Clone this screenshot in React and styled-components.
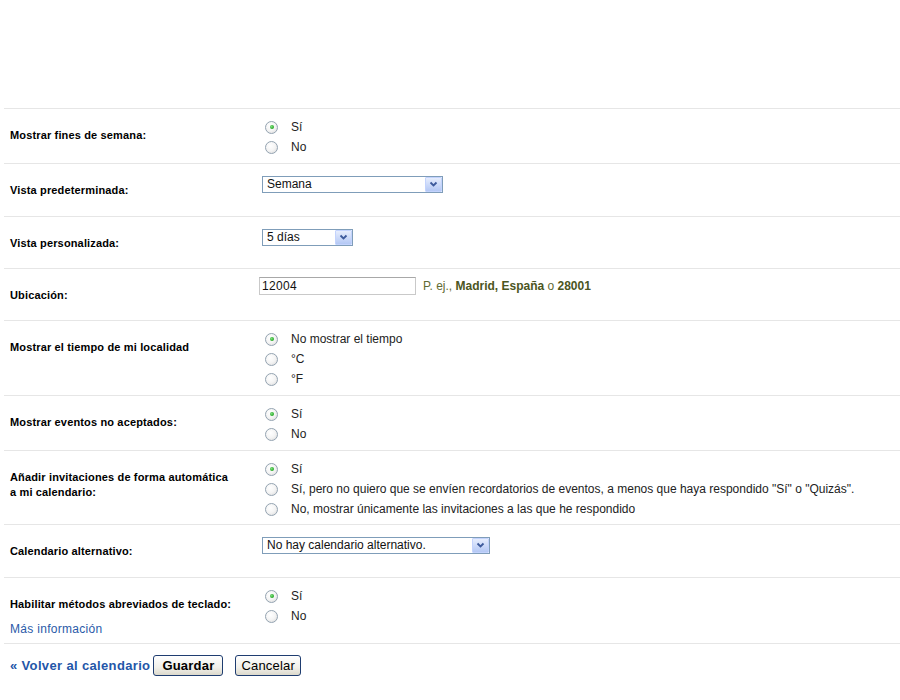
import React from "react";
import styled, { createGlobalStyle } from "styled-components";

const Global = createGlobalStyle`
  html, body { margin: 0; padding: 0; background: #fff; }
  body { font-family: "Liberation Sans", Arial, sans-serif; color: #000; }
`;

const Page = styled.div`
  padding: 108px 0 0 4px;
  width: 900px;
  box-sizing: border-box;
`;

const Row = styled.div`
  display: flex;
  border-top: 1px solid #e6e6e6;
`;

const LabelCell = styled.div`
  width: 255px;
  flex: none;
  box-sizing: border-box;
  padding: 19px 6px ${(p) => (p.$pb != null ? p.$pb : 17)}px 6px;
  font-size: 11px;
  line-height: 15px;
  font-weight: bold;
  letter-spacing: 0.15px;
`;

const MoreLink = styled.a`
  display: block;
  margin-top: 10px;
  font-weight: normal;
  font-size: 12px;
  line-height: 15px;
  color: #2a5aa8;
  text-decoration: none;
  letter-spacing: 0.3px;
`;

const ContentCell = styled.div`
  flex: 1;
  padding: ${(p) => (p.$pt != null ? p.$pt : 8)}px 0 ${(p) => (p.$pb != null ? p.$pb : 6)}px 0;
  font-size: 12px;
`;

const Option = styled.label`
  display: flex;
  align-items: center;
  height: 20px;
  color: #222;
`;

const Radio = styled.span`
  position: relative;
  width: 11px;
  height: 11px;
  margin-left: 6px;
  margin-right: 13px;
  border-radius: 50%;
  border: 1px solid #94a3b1;
  background: radial-gradient(circle at 40% 35%, #ffffff 0%, #f4f4f4 50%, #d8d8d8 100%);
  flex: none;
  &::after {
    content: "";
    display: ${(p) => (p.$checked ? "block" : "none")};
    position: absolute;
    left: 3.5px;
    top: 3.5px;
    width: 4px;
    height: 4px;
    border-radius: 50%;
    background: radial-gradient(circle at 40% 40%, #7fe07f 0%, #2fae2f 60%, #1c8a1c 100%);
  }
`;

const SelectBox = styled.div`
  display: flex;
  align-items: center;
  width: ${(p) => p.$w}px;
  height: 17px;
  margin-left: 3px;
  margin-top: 4px;
  box-sizing: border-box;
  border: 1px solid #7f9db9;
  background: #fff;
  font-size: 12px;
  color: #111;
`;

const SelectText = styled.span`
  flex: 1;
  padding-left: 4px;
  line-height: 15px;
  white-space: nowrap;
  overflow: hidden;
`;

const Arrow = styled.span`
  width: 17px;
  height: 15px;
  flex: none;
  display: flex;
  align-items: center;
  justify-content: center;
  border: 1px solid #c3d3fd;
  box-sizing: border-box;
  border-radius: 1px;
  background: linear-gradient(#e6edfd, #b4c8f5);
`;

const InputRow = styled.div`
  display: flex;
  align-items: center;
`;

const TextInput = styled.div`
  width: 157px;
  height: 18px;
  box-sizing: border-box;
  border: 1px solid #c9c9c9;
  border-top-color: #a8a8a8;
  padding-left: 2px;
  font-size: 12px;
  line-height: 16px;
  color: #111;
  letter-spacing: 0.3px;
`;

const Hint = styled.span`
  margin-left: 7px;
  font-size: 12px;
  color: #5f6b34;
  b { color: #4b5522; }
`;

const Footer = styled.div`
  display: flex;
  align-items: center;
  border-top: 1px solid #e6e6e6;
  padding: 11px 6px 0 6px;
`;

const BackLink = styled.a`
  font-size: 13px;
  font-weight: bold;
  color: #2456a8;
  text-decoration: none;
  letter-spacing: 0.35px;
  margin-right: 3px;
`;

const Button = styled.button`
  height: 21px;
  padding: 0 ${(p) => (p.$primary ? 8 : 5)}px;
  margin-left: ${(p) => (p.$primary ? 0 : 12)}px;
  font-family: "Liberation Sans", Arial, sans-serif;
  font-size: 13px;
  letter-spacing: 0.2px;
  font-weight: ${(p) => (p.$primary ? "bold" : "normal")};
  color: #000;
  border: 1px solid #1f3d70;
  border-radius: 3px;
  background: linear-gradient(#ffffff, #f1f0ea 60%, #dcd9cc);
`;

const Chevron = () => (
  <svg width="9" height="7" viewBox="0 0 9 7">
    <path d="M1.5 1.5 L4.5 4.5 L7.5 1.5" fill="none" stroke="#3d5a9c" strokeWidth="1.8" />
  </svg>
);

const Select = ({ w, value }) => (
  <SelectBox $w={w}>
    <SelectText>{value}</SelectText>
    <Arrow>
      <Chevron />
    </Arrow>
  </SelectBox>
);

const Radios = ({ options, checked = 0 }) =>
  options.map((o, i) => (
    <Option key={i}>
      <Radio $checked={i === checked} />
      {o}
    </Option>
  ));

export default function App() {
  return (
    <>
      <Global />
      <Page>
        <Row>
          <LabelCell>Mostrar fines de semana:</LabelCell>
          <ContentCell>
            <Radios options={["Sí", "No"]} />
          </ContentCell>
        </Row>
        <Row>
          <LabelCell $pb={18}>Vista predeterminada:</LabelCell>
          <ContentCell>
            <Select w={181} value="Semana" />
          </ContentCell>
        </Row>
        <Row>
          <LabelCell>Vista personalizada:</LabelCell>
          <ContentCell>
            <Select w={91} value="5 días" />
          </ContentCell>
        </Row>
        <Row>
          <LabelCell>Ubicación:</LabelCell>
          <ContentCell $pt={8}>
            <InputRow>
              <TextInput>12004</TextInput>
              <Hint>
                P. ej., <b>Madrid, España</b> o <b>28001</b>
              </Hint>
            </InputRow>
          </ContentCell>
        </Row>
        <Row>
          <LabelCell>Mostrar el tiempo de mi localidad</LabelCell>
          <ContentCell>
            <Radios options={["No mostrar el tiempo", "°C", "°F"]} />
          </ContentCell>
        </Row>
        <Row>
          <LabelCell>Mostrar eventos no aceptados:</LabelCell>
          <ContentCell>
            <Radios options={["Sí", "No"]} />
          </ContentCell>
        </Row>
        <Row>
          <LabelCell $pb={15}>
            Añadir invitaciones de forma automática
            <br />a mi calendario:
          </LabelCell>
          <ContentCell $pb={5}>
            <Radios
              options={[
                "Sí",
                "Sí, pero no quiero que se envíen recordatorios de eventos, a menos que haya respondido \"Sí\" o \"Quizás\".",
                "No, mostrar únicamente las invitaciones a las que he respondido",
              ]}
            />
          </ContentCell>
        </Row>
        <Row>
          <LabelCell $pb={18}>Calendario alternativo:</LabelCell>
          <ContentCell>
            <Select w={228} value="No hay calendario alternativo." />
          </ContentCell>
        </Row>
        <Row>
          <LabelCell $pb={6}>
            Habilitar métodos abreviados de teclado:
            <MoreLink href="#">Más información</MoreLink>
          </LabelCell>
          <ContentCell>
            <Radios options={["Sí", "No"]} />
          </ContentCell>
        </Row>
        <Footer>
          <BackLink href="#">« Volver al calendario</BackLink>
          <Button $primary>Guardar</Button>
          <Button>Cancelar</Button>
        </Footer>
      </Page>
    </>
  );
}
